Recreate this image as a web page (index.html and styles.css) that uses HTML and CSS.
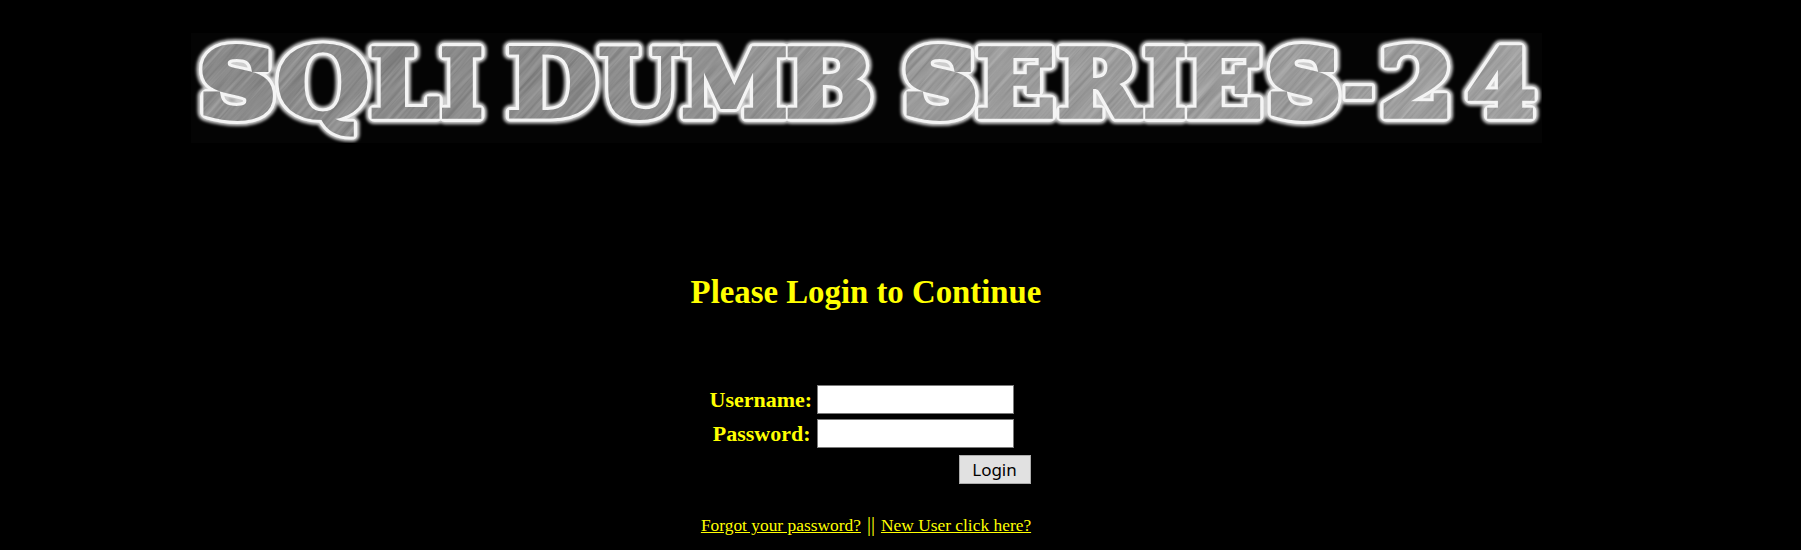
FILE: index.html
```
<!DOCTYPE html>
<html lang="en">
<head>
<meta charset="utf-8">
<title>Login</title>
<link rel="stylesheet" href="styles.css">
</head>
<body>
<main class="page">
<svg class="banner" viewBox="190 33 1351 110" role="img" aria-label="SQLI DUMB SERIES-24">
  <defs>
    <linearGradient id="metal" x1="0" x2="1" y1="0" y2="0">
      <stop offset="0" stop-color="#858585"/>
      <stop offset=".3" stop-color="#888"/>
      <stop offset=".48" stop-color="#999"/>
      <stop offset=".7" stop-color="#9f9f9f"/>
      <stop offset="1" stop-color="#a3a3a3"/>
    </linearGradient>
    <filter id="brushed" x="0" y="0" width="1" height="1" color-interpolation-filters="sRGB">
      <feTurbulence type="fractalNoise" baseFrequency=".012 .3" numOctaves="3" seed="4"/>
      <feColorMatrix values=".7 0 0 0 .24  .7 0 0 0 .24  .7 0 0 0 .24  0 0 0 0 1"/>
    </filter>
    <filter id="glow" x="-5%" y="-30%" width="110%" height="160%"><feGaussianBlur stdDeviation="1.8"/></filter>
    <mask id="letters" maskUnits="userSpaceOnUse" x="190" y="33" width="1351" height="110"><g id="face" class="face"></g></mask>
  </defs>
  <g id="halo" class="halo" filter="url(#glow)"></g>
  <g id="rim" class="rim"></g>
  <g mask="url(#letters)">
    <rect x="190" y="33" width="1351" height="110" fill="url(#metal)"/>
    <g opacity=".3"><rect x="-700" y="-700" width="1500" height="1500" transform="translate(865 88) rotate(-48)" filter="url(#brushed)"/></g>
  </g>
</svg>
<h1 class="title">Please Login to Continue</h1>
<form class="form">
  <label class="label" for="user">Username:</label><input class="field" id="user" type="text">
  <label class="label" for="pass">Password:</label><input class="field" id="pass" type="password">
  <button class="login" type="button">Login</button>
</form>
<nav class="links"><a href="#">Forgot your password?</a><span class="bars">||</span><a href="#">New User click here?</a></nav>
</main>
<script src="banner.js"></script>
</body>
</html>
```
FILE: styles.css
```
body { margin: 0; background: #000; color: #ff0; font-family: "Liberation Serif", serif; overflow: hidden; }
.page { width: 1732px; height: 550px; display: flex; flex-direction: column; align-items: center; }
.banner { width: 1351px; height: 110px; margin-top: 33px; background: #040404; overflow: hidden; flex: none; }
.banner text { font: bold 100px "DejaVu Serif", serif; }
.halo { fill: #ccc; stroke: #ccc; stroke-linejoin: round; }
.rim { fill: #f4f4f4; stroke: #f4f4f4; stroke-linejoin: round; }
.face { fill: #fff; stroke: #fff; stroke-linejoin: miter; }
.title { margin: 130px 0 0; font-size: 32.8px; line-height: 38px; height: 38px; white-space: nowrap; }
.form { width: 313px; margin-top: 74px; display: grid; grid-template-columns: 101px 197px; column-gap: 6px; row-gap: 5px; justify-content: start; }
.label { font-size: 22px; font-weight: bold; line-height: 29px; text-align: right; white-space: nowrap; }
.field { box-sizing: border-box; width: 197px; height: 29px; border: 1px solid #7a7a7a; background: #fff; padding: 0; border-radius: 0; }
.login { grid-column: 1 / 3; justify-self: end; margin: 2px -17px 0 0; box-sizing: border-box; width: 72px; height: 29px; padding: 1px 0 0; border: 1px solid #adadad; border-radius: 0; background: #e1e1e1; color: #000; font: 17px/26px "Noto Sans", sans-serif; }
.links { display: flex; align-items: baseline; margin-top: 28px; font-size: 17.4px; line-height: 24px; white-space: nowrap; }
.links a { color: #ff0; text-decoration: underline; }
.bars { margin: 0 6px; font-size: 20px; }
```
FILE: banner.js
```
// Each entry: letter, left, right, top, bottom of its metal face, extra weight.
const slots = [
  ["S", 200.7, 272.7, 44.7, 121, 5.5], ["Q", 277.3, 366.7, 44, 135.7, 1.5],
  ["L", 370, 439.4, 46.5, 118.5, 3], ["I", 440.4, 481, 46.5, 118.5, 3],
  ["D", 507.3, 595, 46.5, 118.5, 1.5], ["U", 598.3, 680, 46.5, 120, 2],
  ["M", 681.7, 784.8, 46.5, 118.5, 3], ["B", 786, 869.3, 46.5, 118.5, 3],
  ["S", 904, 975, 44.7, 121, 5.5], ["E", 976.5, 1052.7, 46.5, 118.5, 3],
  ["R", 1057.7, 1142.5, 46.5, 118.5, 3], ["I", 1143.7, 1184.4, 46.5, 118.5, 3],
  ["E", 1185.4, 1260, 46.5, 118.5, 3], ["S", 1268.3, 1338.3, 44.7, 121, 5.5],
  ["-", 1344.3, 1371.7, 86, 99.3, 1], ["2", 1382, 1446.7, 44.5, 119, 3],
  ["4", 1466.7, 1534, 46, 119, 3]
];
const pen = document.createElement("canvas").getContext("2d");
pen.font = 'bold 100px "DejaVu Serif"';
const spread = { halo: 5.5, rim: 3.2, face: 0 };
for (const [ch, l, r, t, b, edge] of slots) {
  const m = pen.measureText(ch);
  const sx = (r - l) / (m.actualBoundingBoxRight + m.actualBoundingBoxLeft + 2 * edge);
  const sy = (b - t) / (m.actualBoundingBoxAscent + m.actualBoundingBoxDescent + 2 * edge);
  const x = l + (m.actualBoundingBoxLeft + edge) * sx;
  const y = t + (m.actualBoundingBoxAscent + edge) * sy;
  for (const id of ["halo", "rim", "face"]) {
    const el = document.createElementNS("http://www.w3.org/2000/svg", "text");
    el.textContent = ch;
    el.setAttribute("transform", `matrix(${sx} 0 0 ${sy} ${x} ${y})`);
    el.setAttribute("stroke-width", 2 * (edge + spread[id] / Math.sqrt(sx * sy)));
    document.getElementById(id).append(el);
  }
}
```
